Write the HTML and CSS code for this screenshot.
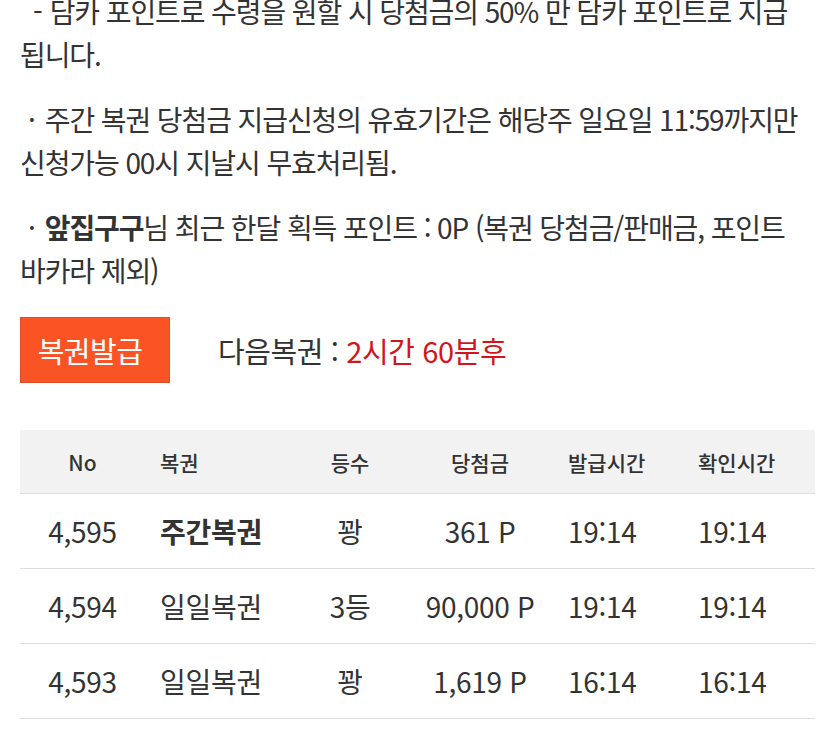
FILE: index.html
```html
<!DOCTYPE html>
<html lang="ko">
<head>
<meta charset="utf-8">
<link rel="stylesheet" href="styles.css">
</head>
<body>
<div class="page">
  <p class="note"><span class="lead1">-</span>담카 포인트로 수령을 원할 시 당첨금의 50% 만 담카 포인트로 지급<br>됩니다.</p>
  <p class="note"><span class="lead2">·</span>주간 복권 당첨금 지급신청의 유효기간은 해당주 일요일 11:59까지만<br>신청가능 00시 지날시 무효처리됨.</p>
  <p class="note"><span class="lead2">·</span><b>앞집구구</b>님 최근 한달 획득 포인트 : 0P (복권 당첨금/판매금, 포인트<br>바카라 제외)</p>
  <div class="issue">
    <button class="btn">복권발급</button>
    <div class="next">다음복권 : <span class="red">2시간 60분후</span></div>
  </div>
  <table class="tbl">
    <thead>
      <tr><th class="c1">No</th><th class="c2">복권</th><th class="c3">등수</th><th class="c4">당첨금</th><th class="c5">발급시간</th><th class="c6">확인시간</th></tr>
    </thead>
    <tbody>
      <tr><td class="c1">4,595</td><td class="c2"><b>주간복권</b></td><td class="c3">꽝</td><td class="c4">361 P</td><td class="c5">19:14</td><td class="c6">19:14</td></tr>
      <tr><td class="c1">4,594</td><td class="c2">일일복권</td><td class="c3">3등</td><td class="c4">90,000 P</td><td class="c5">19:14</td><td class="c6">19:14</td></tr>
      <tr><td class="c1">4,593</td><td class="c2">일일복권</td><td class="c3">꽝</td><td class="c4">1,619 P</td><td class="c5">16:14</td><td class="c6">16:14</td></tr>
    </tbody>
  </table>
</div>
</body>
</html>
```
FILE: styles.css
```css
html, body { margin: 0; padding: 0; background: #fff; }
body {
  font-family: "Noto Sans CJK KR", "Noto Sans", sans-serif;
  color: #333;
  overflow: hidden;
}
.page { padding: 0 20px; margin-top: -10px; }
.note {
  margin: 0 0 22px;
  font-size: 28px;
  line-height: 43px;
  letter-spacing: -1.1px;
  white-space: nowrap;
}
.note b { font-weight: 700; }
.lead1 { display: inline-block; margin-left: 13px; margin-right: 8px; }
.lead2 { display: inline-block; margin-left: 8px; margin-right: 10px; }
.issue { display: flex; align-items: center; gap: 48px; margin-top: 25px; }
.btn {
  width: 150px; height: 66px;
  background: #fb5424; border: 1px solid #d9502a;
  color: #fff; font-family: inherit; font-size: 29px; letter-spacing: -0.5px;
  padding: 0 10px 0 0; margin: 0;
}
.next { font-size: 29px; letter-spacing: -0.4px; }
.red { color: #d3141d; }
.tbl {
  margin-top: 47px;
  width: 795px;
  border-collapse: collapse;
  table-layout: fixed;
}
.tbl th {
  background: #f2f2f2;
  height: 63px;
  font-size: 21px;
  font-weight: 500;
  color: #333;
  padding: 0;
  border-bottom: 1px solid #ddd;
}
.tbl td {
  height: 74px;
  font-size: 28px;
  padding: 0;
  border-bottom: 1px solid #ddd;
  letter-spacing: -0.3px;
}
.c1 { width: 125px; text-align: center; }
.c2 { width: 140px; text-align: left; padding-left: 15px !important; }
.c3 { width: 100px; text-align: center; }
.c4 { width: 160px; text-align: center; }
.c5 { width: 122px; text-align: left; padding-left: 8px !important; }
.c6 { width: 117px; text-align: left; padding-left: 8px !important; }
```
